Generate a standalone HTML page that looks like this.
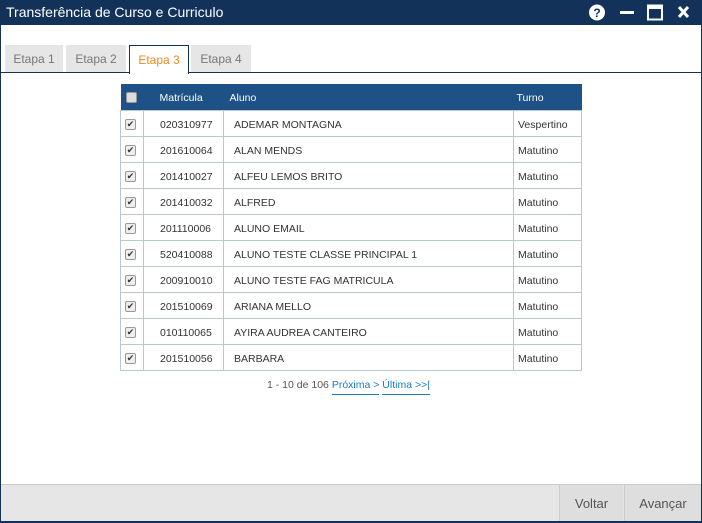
<!DOCTYPE html><html><head><style>
*{margin:0;padding:0;box-sizing:border-box}
body{width:702px;height:523px;background:#12325a;font-family:"Liberation Sans",sans-serif;overflow:hidden;position:relative}
.win{position:absolute;left:1px;top:25px;width:700px;height:496px;background:#fff}
.title{position:absolute;left:6px;top:4px;color:#fff;font-size:14px}
.tab{position:absolute;top:20px;height:28px;background:#e6e6e6;color:#777;font-size:12px;line-height:29px;text-align:center}
.line{position:absolute;left:0;top:47px;width:700px;height:1px;background:#12325a}
table{position:absolute;left:119px;top:59px;width:462px;border-collapse:collapse;font-size:10.5px;color:#333}
th{background:#1e5287;color:#fff;font-weight:normal;height:26px;text-align:left;font-size:10.5px;padding-top:2px}
td{border:1px solid #b8c8d0;height:26px;padding-top:3px}
.cb{width:11px;height:11px;border:1px solid #999;border-radius:2px;background:#eee;display:inline-block;font-size:9px;line-height:9px;text-align:center;color:#333;vertical-align:middle}
.pg{position:absolute;top:354px;left:266px;font-size:10.5px;color:#555}
.pg a{color:#1a7ac0;text-decoration:none;border-bottom:1px solid #1a7ac0;padding-bottom:3px}
.foot{position:absolute;left:0;top:459px;width:700px;height:37px;background:#e6e6e6;border-top:1px solid #ccc}
.btn{position:absolute;top:0;height:36px;line-height:38px;font-size:13px;color:#555;text-align:center;border-left:1px solid #ccc;background:#dedede}
</style></head><body>
<div class="title">Transferência de Curso e Curriculo</div>
<svg style="position:absolute;left:588px;top:4px" width="105" height="17">
<circle cx="9" cy="8.5" r="8" fill="#fff"/><text x="9" y="13" fill="#12325a" font-size="12" font-weight="bold" text-anchor="middle" font-family="Liberation Sans">?</text>
<rect x="32" y="7" width="14" height="3" fill="#fff"/>
<rect x="60" y="1.5" width="14" height="14" fill="none" stroke="#fff" stroke-width="2"/><rect x="60" y="1" width="14" height="4" fill="#fff"/>
<path d="M91 3 L100 13 M100 3 L91 13" stroke="#fff" stroke-width="3"/>
</svg>
<div class="win">
<div class="tab" style="left:4px;width:58px">Etapa 1</div>
<div class="tab" style="left:65px;width:60px">Etapa 2</div>
<div class="tab" style="left:128px;width:60px;background:#fff;border:1px solid #12325a;border-bottom:none;height:29px;color:#f08a1c;z-index:2">Etapa 3</div>
<div class="tab" style="left:190px;width:60px">Etapa 4</div>
<div class="line"></div>
<table>
<tr><th style="width:23px;padding-left:5px"><span class="cb" style="background:#ddd"></span></th><th style="width:80px;padding-left:16px">Matrícula</th><th style="width:290px;padding-left:6px">Aluno</th><th style="padding-left:3px">Turno</th></tr>
<tr><td style="padding-left:4px"><span class="cb">✔</span></td><td style="padding-left:16px">020310977</td><td style="padding-left:10px">ADEMAR MONTAGNA</td><td style="padding-left:4px">Vespertino</td></tr>
<tr><td style="padding-left:4px"><span class="cb">✔</span></td><td style="padding-left:16px">201610064</td><td style="padding-left:10px">ALAN MENDS</td><td style="padding-left:4px">Matutino</td></tr>
<tr><td style="padding-left:4px"><span class="cb">✔</span></td><td style="padding-left:16px">201410027</td><td style="padding-left:10px">ALFEU LEMOS BRITO</td><td style="padding-left:4px">Matutino</td></tr>
<tr><td style="padding-left:4px"><span class="cb">✔</span></td><td style="padding-left:16px">201410032</td><td style="padding-left:10px">ALFRED</td><td style="padding-left:4px">Matutino</td></tr>
<tr><td style="padding-left:4px"><span class="cb">✔</span></td><td style="padding-left:16px">201110006</td><td style="padding-left:10px">ALUNO EMAIL</td><td style="padding-left:4px">Matutino</td></tr>
<tr><td style="padding-left:4px"><span class="cb">✔</span></td><td style="padding-left:16px">520410088</td><td style="padding-left:10px">ALUNO TESTE CLASSE PRINCIPAL 1</td><td style="padding-left:4px">Matutino</td></tr>
<tr><td style="padding-left:4px"><span class="cb">✔</span></td><td style="padding-left:16px">200910010</td><td style="padding-left:10px">ALUNO TESTE FAG MATRICULA</td><td style="padding-left:4px">Matutino</td></tr>
<tr><td style="padding-left:4px"><span class="cb">✔</span></td><td style="padding-left:16px">201510069</td><td style="padding-left:10px">ARIANA MELLO</td><td style="padding-left:4px">Matutino</td></tr>
<tr><td style="padding-left:4px"><span class="cb">✔</span></td><td style="padding-left:16px">010110065</td><td style="padding-left:10px">AYIRA AUDREA CANTEIRO</td><td style="padding-left:4px">Matutino</td></tr>
<tr><td style="padding-left:4px"><span class="cb">✔</span></td><td style="padding-left:16px">201510056</td><td style="padding-left:10px">BARBARA</td><td style="padding-left:4px">Matutino</td></tr>
</table>
<div class="pg">1 - 10 de 106 <a>Próxima &gt;</a> <a>Última &gt;&gt;|</a></div>
<div class="foot">
<div class="btn" style="left:558px;width:64px">Voltar</div>
<div class="btn" style="left:623px;width:77px">Avançar</div>
</div>
</div>
</body></html>
